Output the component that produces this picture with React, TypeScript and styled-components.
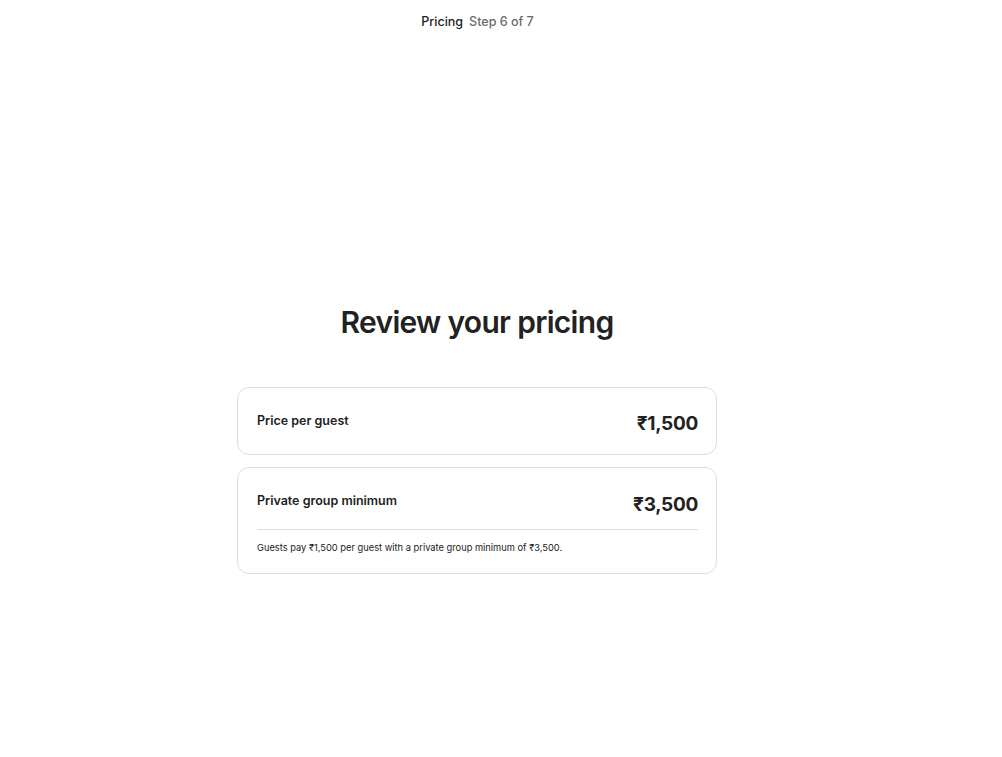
import React from "react";
import styled, { createGlobalStyle } from "styled-components";

const Global = createGlobalStyle`
  html, body { margin: 0; padding: 0; background: #fff; }
  body { font-family: Inter, "Noto Sans", "Liberation Sans", sans-serif; color: #222; }
  * { box-sizing: border-box; }
`;

const Page = styled.div`
  width: 954px;
  height: 757px;
  display: flex;
  flex-direction: column;
  align-items: center;
`;

const Header = styled.div`
  height: 42px;
  display: flex;
  align-items: center;
  gap: 6px;
  font-size: 12.5px;
  font-weight: 500;
  padding-left: 1px;
`;

const Crumb = styled.span<{ $muted?: boolean }>`
  color: ${(p) => (p.$muted ? "#6a6a6a" : "#222")};
`;

const Main = styled.div`
  width: 480px;
  margin-top: 261px;
  display: flex;
  flex-direction: column;
  gap: 12px;
`;

const Title = styled.h1`
  margin: 0 0 34px;
  text-align: center;
  font-size: 30px;
  font-weight: 600;
  letter-spacing: -0.7px;
  line-height: 38px;
  color: #222;
`;

const Card = styled.div`
  border: 1px solid #dddddd;
  border-radius: 12px;
  padding: 20px 18px 20px 19px;
  display: flex;
  flex-direction: column;
`;

const Row = styled.div`
  height: 26px;
  display: flex;
  align-items: center;
  justify-content: space-between;
`;

const Label = styled.span`
  font-size: 12.5px;
  font-weight: 600;
  margin-top: -2px;
`;

const Price = styled.span<{ $shift?: number }>`
  font-size: 19px;
  font-weight: 700;
  letter-spacing: -0.3px;
  margin-top: ${(p) => p.$shift ?? 4}px;
`;

const Divider = styled.div`
  height: 1px;
  background: #dddddd;
  margin: 15px 0 11px;
`;

const Note = styled.div`
  font-size: 9.3px;
  line-height: 14px;
  color: #222;
  margin-bottom: -2px;
`;

export default function App() {
  return (
    <Page>
      <Global />
      <Header>
        <Crumb>Pricing</Crumb>
        <Crumb $muted>Step 6 of 7</Crumb>
      </Header>
      <Main>
        <Title>Review your pricing</Title>
        <Card>
          <Row>
            <Label>Price per guest</Label>
            <Price $shift={4}>₹1,500</Price>
          </Row>
        </Card>
        <Card>
          <Row>
            <Label>Private group minimum</Label>
            <Price $shift={6}>₹3,500</Price>
          </Row>
          <Divider />
          <Note>Guests pay ₹1,500 per guest with a private group minimum of ₹3,500.</Note>
        </Card>
      </Main>
    </Page>
  );
}
